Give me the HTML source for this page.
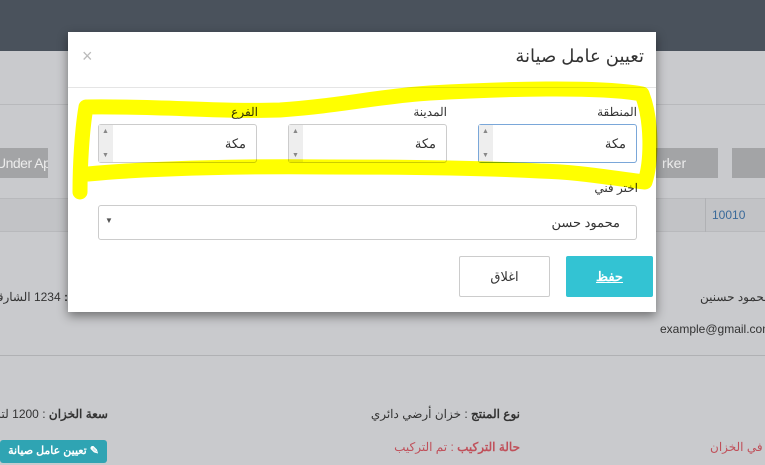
<!DOCTYPE html>
<html><head><meta charset="utf-8"><style>
*{box-sizing:border-box;margin:0;padding:0}
body{width:765px;height:465px;overflow:hidden;position:relative;background:#c9cacd;font-family:"Liberation Sans","Noto Sans CJK SC",sans-serif;font-size:13px;color:#333}
.abs{position:absolute}
.top{left:0;top:0;width:765px;height:51px;background:#4a525c}
.modal{left:68px;top:32px;width:588px;height:280px;background:#fff;box-shadow:0 4px 10px rgba(0,0,0,.45);direction:rtl}
.inp{position:absolute;height:39px;border:1px solid #ccc;border-radius:3px;background:#fff;font-size:13px}
.spin{position:absolute;left:0;top:0;width:14px;height:100%;background:#eee;font-size:7px;color:#888}
.lbl{position:absolute;font-size:12px;color:#333}
</style></head><body>
<div class="abs top"></div>
<div class="abs" style="left:0;top:104px;width:765px;height:1px;background:#b8b9bc"></div>
<div class="abs" style="left:0;top:148px;width:48px;height:30px;background:#a3a4a6;color:#ececec;font-size:14px;line-height:30px;white-space:nowrap;overflow:hidden;text-indent:-4px;letter-spacing:-0.5px">Under Appr</div>
<div class="abs" style="left:656px;top:148px;width:62px;height:30px;background:#a3a4a6;color:#ececec;font-size:14px;line-height:30px;padding-left:6px">rker</div>
<div class="abs" style="left:732px;top:148px;width:40px;height:30px;background:#a3a4a6"></div>
<div class="abs" style="left:0;top:198px;width:765px;height:34px;background:#c2c3c6;border-top:1px solid #b8b9bc;border-bottom:1px solid #b8b9bc"></div>
<div class="abs" style="left:705px;top:198px;width:1px;height:34px;background:#b0b1b4"></div>
<div class="abs" style="left:712px;top:208px;font-size:12px;color:#3a6a9a">10010</div>
<div class="abs" style="left:0;top:290px;font-size:12px;white-space:nowrap;direction:rtl;width:68px;text-align:right"><b>:</b> 1234 الشارقة</div>
<div class="abs" style="left:700px;top:290px;font-size:12px;white-space:nowrap">محمود حسنين</div>
<div class="abs" style="left:660px;top:322px;font-size:12px;white-space:nowrap">example@gmail.com</div>
<div class="abs" style="left:0;top:355px;width:765px;height:1px;background:#b0b1b4"></div>
<div class="abs" style="left:0;top:407px;font-size:12px;white-space:nowrap;direction:rtl;width:108px;text-align:right"><b>سعة الخزان</b> : 1200 لتر</div>
<div class="abs" style="left:330px;top:407px;font-size:12px;white-space:nowrap;direction:rtl;width:190px;text-align:right"><b>نوع المنتج</b> : خزان أرضي دائري</div>
<div class="abs" style="left:330px;top:440px;font-size:12px;white-space:nowrap;direction:rtl;width:190px;text-align:right;color:#c0505a"><b>حالة التركيب</b> : تم التركيب</div>
<div class="abs" style="left:710px;top:440px;font-size:12px;white-space:nowrap;color:#c0505a">في الخزان</div>
<div class="abs" style="left:0;top:440px;width:107px;height:23px;background:#2fa4b3;border-radius:3px;color:#fff;font-size:11px;line-height:23px;text-align:center;direction:rtl"><b>✎ تعيين عامل صيانة</b></div>

<div class="abs modal">
  <div style="position:absolute;right:12px;top:14px;font-size:18px;color:#333">تعيين عامل صيانة</div>
  <div style="position:absolute;left:14px;top:14px;font-size:18px;color:#bbb;direction:ltr">×</div>
  <div style="position:absolute;left:0;top:55px;width:588px;height:1px;background:#e5e5e5"></div>
  <div class="lbl" style="right:19px;top:73px">المنطقة</div>
  <div class="lbl" style="right:209px;top:73px">المدينة</div>
  <div class="lbl" style="right:398px;top:73px">الفرع</div>
  <div class="inp" style="left:410px;top:92px;width:159px;border-color:#7aa7d9"><div class="spin"><span style="position:absolute;left:3px;top:3px">▲</span><span style="position:absolute;left:3px;bottom:3px">▼</span></div><span style="position:absolute;right:10px;top:11px">مكة</span></div>
  <div class="inp" style="left:220px;top:92px;width:159px"><div class="spin"><span style="position:absolute;left:3px;top:3px">▲</span><span style="position:absolute;left:3px;bottom:3px">▼</span></div><span style="position:absolute;right:10px;top:11px">مكة</span></div>
  <div class="inp" style="left:30px;top:92px;width:159px"><div class="spin"><span style="position:absolute;left:3px;top:3px">▲</span><span style="position:absolute;left:3px;bottom:3px">▼</span></div><span style="position:absolute;right:10px;top:11px">مكة</span></div>
  <div class="lbl" style="right:18px;top:149px">اختر فني</div>
  <div class="inp" style="left:30px;top:173px;width:539px;height:35px"><span style="position:absolute;left:6px;top:10px;font-size:8px;color:#555">▼</span><span style="position:absolute;right:16px;top:9px">محمود حسن</span></div>
  <div style="position:absolute;left:498px;top:224px;width:87px;height:41px;background:#33c3d3;border-radius:2px;color:#fff;font-weight:bold;text-align:center;line-height:41px;text-decoration:underline">حفظ</div>
  <div style="position:absolute;left:391px;top:224px;width:91px;height:41px;border:1px solid #ccc;border-radius:2px;text-align:center;line-height:39px">اغلاق</div>
</div>
<svg class="abs" style="left:0;top:0;mix-blend-mode:multiply" width="765" height="465">
<path d="M88,107 C160,106 220,112 280,110 C340,106 380,96 430,93 C500,89 600,86 642,94 C652,120 652,160 645,182 C610,178 580,172 540,171 C480,168 420,167 330,167 C250,166 150,168 88,174 M86,107 C82,130 80,165 80,192" fill="none" stroke="#ffff00" stroke-width="15" stroke-linejoin="round" stroke-linecap="round"/>
</svg>
</body></html>
